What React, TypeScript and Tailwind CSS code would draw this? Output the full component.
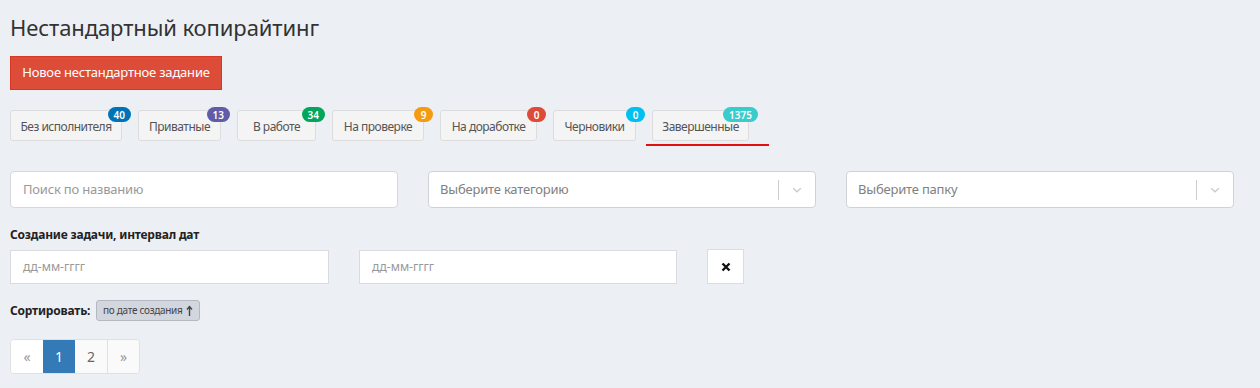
import React from "react";

const tabs = [
  { label: "Без исполнителя", count: "40", color: "bg-[#0073b7]", w: "w-[112px]" },
  { label: "Приватные", count: "13", color: "bg-[#605ca8]", w: "w-[83px]" },
  { label: "В работе", count: "34", color: "bg-[#00a65a]", w: "w-[79px]" },
  { label: "На проверке", count: "9", color: "bg-[#f39c12]", w: "w-[92px]" },
  { label: "На доработке", count: "0", color: "bg-[#dd4b39]", w: "w-[97px]" },
  { label: "Черновики", count: "0", color: "bg-[#00c0ef]", w: "w-[83px]" },
  { label: "Завершенные", count: "1375", color: "bg-[#39cccc]", w: "w-[97px]" },
];

function Chevron() {
  return (
    <svg width="14" height="14" viewBox="0 0 20 20" className="text-[#ccc]">
      <path d="M4.5 7.5 L10 12.5 L15.5 7.5" fill="none" stroke="currentColor" strokeWidth="2" />
    </svg>
  );
}

function Select({ text }: { text: string }) {
  return (
    <div className="flex h-[37px] items-center rounded-[4px] border border-[#cfd3d9] bg-white">
      <div className="flex-1 pl-[11px] text-[13px] tracking-[-0.2px] text-[#808080]">{text}</div>
      <div className="h-[20px] w-px bg-[#ccc]" />
      <div className="flex w-[36px] items-center justify-center">
        <Chevron />
      </div>
    </div>
  );
}

export default function App() {
  return (
    <div className="min-h-[388px] bg-[#ecf0f5] px-[10px] pt-[13px] text-[#333]" style={{ fontFamily: '"Noto Sans", "Open Sans", sans-serif' }}>
      <h1 className="text-[22px] leading-[28px] tracking-[-0.1px] text-[#333]">Нестандартный копирайтинг</h1>
      <div className="mt-[15px]">
        <button className="h-[34px] w-[212px] border border-[#d73925] bg-[#dd4b39] text-[13px] tracking-[-0.2px] text-white">
          Новое нестандартное задание
        </button>
      </div>
      <div className="mt-[20px] flex gap-[16px]">
        {tabs.map((t, i) => (
          <div key={t.label} className="relative">
            <div className={`flex h-[31px] ${t.w} items-center justify-center rounded-[3px] border border-[#dcdcdc] bg-[#f4f4f4] pt-[3px] text-[12px] tracking-[-0.5px] text-[#555]`}>
              {t.label}
            </div>
            <span className={`absolute right-[-9px] top-[-3px] flex h-[15px] min-w-[19px] items-center justify-center rounded-[8px] px-[6px] text-[10px] font-semibold leading-none text-white ${t.color}`}>
              {t.count}
            </span>
            {i === 6 && <div className="absolute left-[-6px] top-[34px] h-[2px] w-[123px] bg-[#e01010]" />}
          </div>
        ))}
      </div>
      <div className="mt-[30px] grid w-[1224px] grid-cols-3 gap-[30px]">
        <div className="flex h-[37px] items-center rounded-[4px] border border-[#d5d8dd] bg-white pl-[12px] text-[13px] tracking-[-0.2px] text-[#999]">
          Поиск по названию
        </div>
        <Select text="Выберите категорию" />
        <Select text="Выберите папку" />
      </div>
      <div className="mt-[18px] text-[12px] font-bold tracking-[-0.2px] text-[#222]">Создание задачи, интервал дат</div>
      <div className="mt-[5px] flex items-center">
        <div className="flex h-[34px] w-[319px] items-center border border-[#d9dbe0] bg-white pl-[12px] text-[12px] text-[#999]">
          дд-мм-гггг
        </div>
        <div className="ml-[30px] flex h-[34px] w-[318px] items-center border border-[#d9dbe0] bg-white pl-[12px] text-[12px] text-[#999]">
          дд-мм-гггг
        </div>
        <div className="ml-[30px] flex h-[35px] w-[37px] items-center justify-center border border-[#dcdcdc] bg-white">
          <svg width="10" height="10" viewBox="0 0 10 10">
            <path d="M1.5 1.5 L8.5 8.5 M8.5 1.5 L1.5 8.5" stroke="#111" strokeWidth="2.4" />
          </svg>
        </div>
      </div>
      <div className="mt-[16px] flex items-center gap-[6px]">
        <span className="text-[12px] font-bold tracking-[-0.2px] text-[#222]">Сортировать:</span>
        <span className="flex h-[21px] items-center gap-[3px] rounded-[3px] border border-[#b5b9bf] bg-[#d2d6de] px-[6px] text-[10px] tracking-[-0.3px] text-[#444]">
          по дате создания
          <svg width="7" height="12" viewBox="0 0 7 12">
            <path d="M3.5 11 V2 M1 4.5 L3.5 1.5 L6 4.5" fill="none" stroke="#444" strokeWidth="1.4" />
          </svg>
        </span>
      </div>
      <div className="mt-[18px] flex w-fit overflow-hidden rounded-[4px] border border-[#e0e0e0] text-[14px]">
        <div className="flex h-[33px] w-[32px] items-center justify-center bg-white text-[#999]">«</div>
        <div className="flex h-[33px] w-[32px] items-center justify-center bg-[#337ab7] text-white">1</div>
        <div className="flex h-[33px] w-[33px] items-center justify-center border-r border-[#e0e0e0] bg-[#fafafa] text-[#666]">2</div>
        <div className="flex h-[33px] w-[31px] items-center justify-center bg-[#fafafa] text-[#999]">»</div>
      </div>
    </div>
  );
}
